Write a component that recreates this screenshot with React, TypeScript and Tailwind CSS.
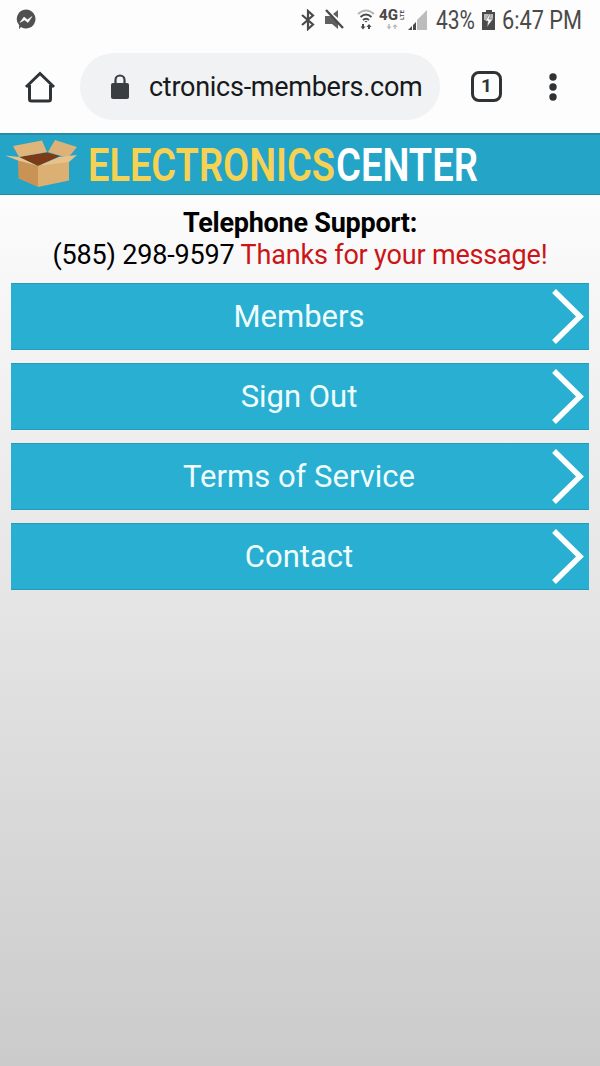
const links = ['Members', 'Sign Out', 'Terms of Service', 'Contact'];

const StatusBar = () => (
  <div className="h-10 pl-4 pr-[18px] flex items-center justify-between text-[#4a4a4a]">
    {/* Messenger */}
    <svg width="20" height="22" viewBox="0 0 20 22" fill="none">
      <path d="M10 .5a9.5 9.5 0 1 1-5 17.6L3 20.3l.2-4A9.5 9.5 0 0 1 10 .5Z" fill="#505050" />
      <path d="M4 13.5 8 8l3.5 2.8L16 7.5l-4 6L8.500 11Z" fill="#fff" stroke="#fff" strokeWidth=".5" />
    </svg>

    <div className="flex items-center">
      {/* Bluetooth */}
      <svg width="14" height="22" viewBox="0 0 14 22" className="mr-[9px]" fill="none" stroke="currentColor" strokeWidth="2.200">
        <path d="m1 6 11 9.500L7 20V2l5 4.500L1 16" />
      </svg>
      {/* Muted speaker */}
      <svg width="20" height="22" viewBox="0 0 20 22" className="mr-[13px]">
        <path d="M1 7h6l7 6v7l-6-5H1ZM9 5l5-4v8Z" fill="#606060" />
        <path d="m2 1 17 18" stroke="#4a4a4a" strokeWidth="2.400" />
      </svg>
      {/* Wi-Fi */}
      <svg width="18" height="22" viewBox="0 0 18 22" className="mr-1" fill="none" strokeWidth="2">
        <path d="M1 5q8-7 16 0" stroke="#b5b5b5" />
        <path d="M3.500 8q5.500-5 11 0M6 11q3-2.500 6 0" stroke="#4a4a4a" />
        <path d="m7.500 12 1.500 1.500 1.500-1.500Z" fill="#4a4a4a" />
        <path d="M6 15v4M12 20v-4" stroke="#4a4a4a" />
        <path d="M3.500 17.500h5L6 20.500ZM9.500 18h5L12 15Z" fill="#4a4a4a" />
      </svg>
      {/* 4G LTE */}
      <svg width="26" height="22" viewBox="0 0 26 22" className="mr-[3px] overflow-visible" fill="#4a4a4a">
        <text x="0" y="11" fontSize="14" fontWeight="800" textLength="19" lengthAdjust="spacingAndGlyphs" className="font-[Roboto,sans-serif]">4G</text>
        <text transform="translate(20 11) rotate(-90)" x="0" y="5" fontSize="6" fontWeight="700" textLength="10" lengthAdjust="spacingAndGlyphs" className="font-[Roboto,sans-serif]">LTE</text>
        <path d="M10 15v4M16 20v-4" stroke="#bbb" strokeWidth="1.500" />
        <path d="M7.500 17.500h5L10 20.500ZM13.500 18h5L16 15Z" fill="#bbb" />
      </svg>
      {/* Signal */}
      <svg width="20" height="22" viewBox="0 0 20 22" className="mr-2">
        <path d="M9 11l10-10v20H9Z" fill="#bcbcbc" />
        <path d="M0 21l4-4v4ZM5 16l3-3v8H5Z" fill="#4a4a4a" />
      </svg>
      <svg width="40" height="30" viewBox="0 0 40 30" className="mr-[6px] overflow-visible" fill="#4a4a4a">
        <text x="0" y="24" fontSize="25" textLength="39" lengthAdjust="spacingAndGlyphs" className="font-[Roboto,sans-serif]">43%</text>
      </svg>
      {/* Charging battery */}
      <svg width="14" height="22" viewBox="0 0 14 22" className="mr-[6px]">
        <path d="M4 1h6v2h3v18H0V3h4Z" fill="#4a4a4a" />
        <path d="M2 5h9v6H2Z" fill="#bbb" />
        <path d="M7.500 5 3 12h3l-1 6 6-8H7l2-5Z" fill="#f7f7f7" stroke="#606060" strokeWidth=".6" />
      </svg>
      <svg width="80" height="30" viewBox="0 0 80 30" className="overflow-visible" fill="#4a4a4a">
        <text x="0" y="24" fontSize="25" textLength="80" lengthAdjust="spacingAndGlyphs" className="font-[Roboto,sans-serif]">6:47 PM</text>
      </svg>
    </div>
  </div>
);

const BrowserBar = () => (
  <div className="h-[93px] pt-[13px] pl-6 pr-8 flex items-start">
    <svg width="32" height="34" viewBox="0 0 32 34" className="mt-[17px] mr-6" fill="none" stroke="#303336" strokeWidth="3">
      <path d="M2 17 16 3.500 30 17M5.500 15v14q0 2 2 2h17q2 0 2-2V15" />
    </svg>
    <div className="w-[360px] h-[67px] rounded-full bg-[#f0f2f4] pl-[30px] flex items-center">
      <svg width="20" height="26" viewBox="0 0 20 26" className="mr-[19px]">
        <rect x="1" y="9" width="18" height="16" rx="2" fill="#3b3e41" />
        <path d="M5.500 10V6a4.500 4.500 0 0 1 9 0v4" fill="none" stroke="#3b3e41" strokeWidth="2.200" />
      </svg>
      <span className="pt-0.5 text-[27px] tracking-[-0.27px] text-[#17191b] whitespace-nowrap">ctronics-members.com</span>
    </div>
    <div className="mt-[18px] ml-[31px] w-[31px] h-[31px] border-[3px] border-[#303336] rounded-lg flex items-center justify-center text-[19px] font-bold text-[#303336]">
      1
    </div>
    <svg width="8" height="30" viewBox="0 0 8 30" className="mt-5 ml-[47px]" fill="#303336">
      <circle cx="4" cy="4" r="3.700" />
      <circle cx="4" cy="14" r="3.700" />
      <circle cx="4" cy="24" r="3.700" />
    </svg>
  </div>
);

const Header = () => (
  <header className="h-[62px] bg-[#24a4c6] border-t-2 border-t-[#288ba5] border-b border-b-[#238ba8] flex items-start">
    <svg width="80" height="58" viewBox="0 0 80 58">
      <path d="m19 22 28-4.500L60 21 38 31Z" fill="#7c3a17" />
      <path d="m13 11 29-5.500L47 17l-28 5Z" fill="#dfb57b" />
      <path d="m55 5 22 7-9 11-20-6Z" fill="#dcb278" />
      <path d="m18 25 20 6v21l-19.500-8.500Z" fill="#c99355" />
      <path d="m38 31 31-5v19.500L38 52Z" fill="#dcb072" />
      <path d="m5 20.500 14 1.500 19 9-20-5.500Z" fill="#e8c28c" />
      <path d="m38 31 21-9 18-2-8 7Z" fill="#e8c28c" />
    </svg>
    <svg width="400" height="58" viewBox="0 0 400 58" className="ml-2 overflow-visible font-[Roboto,sans-serif]" fontSize="47" fontWeight="600">
      <text x="0" y="45.500" textLength="247" lengthAdjust="spacingAndGlyphs" fill="#f5d154">ELECTRONICS</text>
      <text x="248" y="45.500" textLength="142" lengthAdjust="spacingAndGlyphs" fill="#fff">CENTER</text>
    </svg>
  </header>
);

const App = () => (
  <div className="w-[600px] h-[1066px] flex flex-col overflow-hidden bg-[#fdfdfd] font-[Roboto,sans-serif]">
    <StatusBar />
    <BrowserBar />
    <Header />
    <main className="flex-1 bg-linear-to-b from-[#fcfcfc] to-[#cbcbcb] px-[11px] pt-3">
      <div className="text-center text-[27px] leading-8 text-black whitespace-nowrap">
        <p className="font-bold tracking-[-0.24px]">Telephone Support:</p>
        <p className="tracking-[-0.18px]">
          (585) 298-9597 <span className="text-[#cb1517]">Thanks for your message!</span>
        </p>
      </div>
      <nav className="mt-3 flex flex-col gap-[13px]">
        {links.map((label) => (
          <a
            key={label}
            className="h-[67px] bg-[#29afd1] border-y border-[#2799b9] flex items-center text-[31px] text-[#f0fdff]"
          >
            <span className="flex-1 pl-9 pt-0.5 text-center">{label}</span>
            <svg width="38" height="60" viewBox="0 0 38 60" fill="none" stroke="#fff" strokeWidth="5.500">
              <path d="m3 4 26 25.500L3 55" />
            </svg>
          </a>
        ))}
      </nav>
    </main>
  </div>
);

export default App;
